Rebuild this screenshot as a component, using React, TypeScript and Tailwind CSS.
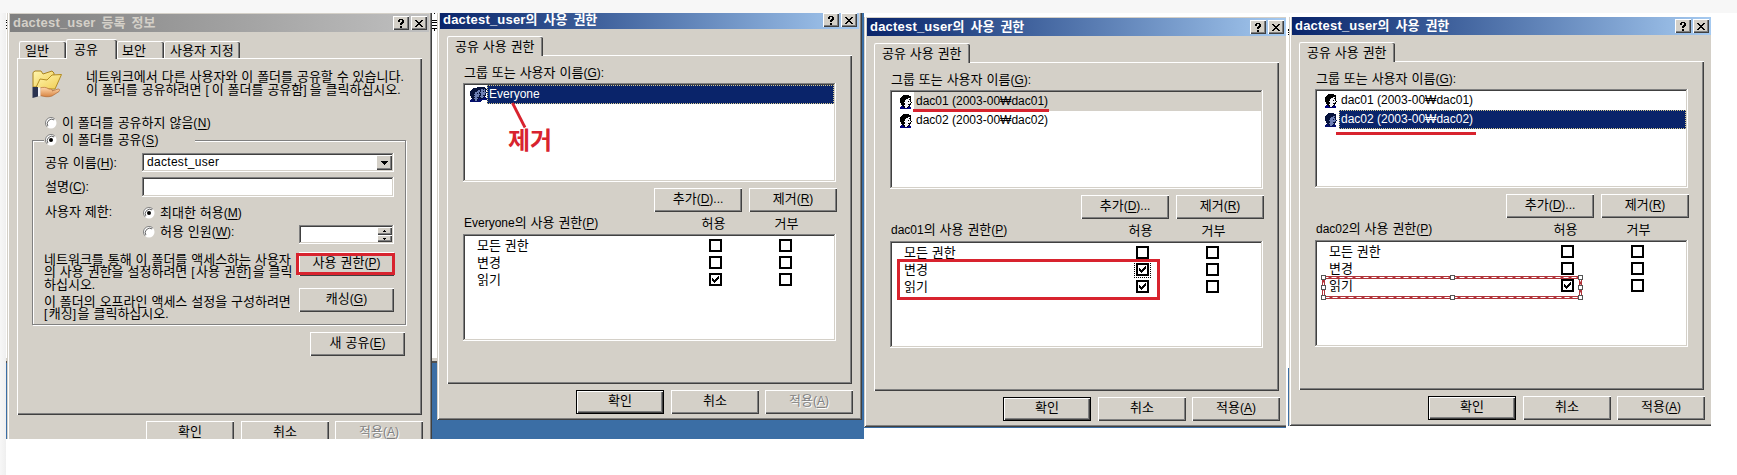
import React from 'react';

const RAISED = 'bg-[#d4d0c8] shadow-[inset_1px_1px_0_#fff,inset_-1px_-1px_0_#404040,inset_-2px_-2px_0_#808080]';
const SUNKEN = 'bg-white shadow-[inset_-1px_-1px_0_#fff,inset_1px_1px_0_#808080,inset_-2px_-2px_0_#d4d0c8,inset_2px_2px_0_#404040]';

/* Label text: "&X" marks an accelerator, Latin runs are set in a narrower face. */
function T({ s, latin = 'text-[12px]', className = '' }: { s: string; latin?: string; className?: string }) {
  const runs = s.match(/[가-힣 ]+|[^가-힣 ]+( [^가-힣 ]+)*/g) ?? [];
  return (
    <span className={`whitespace-pre [word-spacing:1px] ${className}`}>
      {runs.map((run, i) => {
        if (/[가-힣]/.test(run) || run.trim() === '') return <span key={i}>{run}</span>;
        const at = run.indexOf('&');
        return (
          <span key={i} className={`font-['Liberation_Sans','Noto_Sans_CJK_KR',sans-serif] [word-spacing:0px] ${latin}`}>
            {at < 0 ? run : (
              <>
                {run.slice(0, at)}
                <span className="underline decoration-1 underline-offset-2">{run[at + 1]}</span>
                {run.slice(at + 2)}
              </>
            )}
          </span>
        );
      })}
    </span>
  );
}

function Button({ s, className = 'w-[88px]', isDefault = false, disabled = false }: { s: string; className?: string; isDefault?: boolean; disabled?: boolean }) {
  const face = isDefault
    ? 'bg-[#d4d0c8] border border-black shadow-[inset_1px_1px_0_#fff,inset_-1px_-1px_0_#404040,inset_-2px_-2px_0_#808080]'
    : RAISED;
  return (
    <button className={`flex h-[24px] shrink-0 items-center justify-center pb-[4px] ${face} ${className} ${disabled ? 'text-[#808080] [text-shadow:1px_1px_0_#fff]' : ''}`}>
      <T s={s} />
    </button>
  );
}

function TitleBar({ s, active }: { s: string; active: boolean }) {
  return (
    <div className={`flex h-[18px] shrink-0 items-center pl-[3px] pr-[2px] font-bold bg-linear-to-r ${active ? 'from-[#0a246a] to-[#a6caf0] text-white' : 'from-[#808080] to-[#c0c0c0] text-[#d4d0c8]'}`}>
      <T s={s} latin="text-[13px] tracking-[0.2px]" className="grow pb-[2px] [word-spacing:3px]" />
      <div className="flex gap-[2px]">
        <span className={`flex h-[14px] w-[16px] items-center justify-center text-black ${RAISED}`}>
          <svg width="8" height="9" viewBox="0 0 8 9" shapeRendering="crispEdges"><path d="M2 0h4v1h1v3H6v1H5v1H3V4h1V3h1V1H3v2H1V1h1zM3 7h2v2H3z" /></svg>
        </span>
        <span className={`flex h-[14px] w-[16px] items-center justify-center text-black ${RAISED}`}>
          <svg width="8" height="7" viewBox="0 0 8 7" shapeRendering="crispEdges"><path d="M0 0h2v1h1v1h2V1h1V0h2v1H7v1H6v1H5v1h1v1h1v1h1v1H6V6H5V5H3v1H2v1H0V6h1V5h1V4h1V3H2V2H1V1H0z" /></svg>
        </span>
      </div>
    </div>
  );
}

function Frame({ title, active = true, className = '', children }: { title: string; active?: boolean; className?: string; children: React.ReactNode }) {
  return (
    <div className={`relative flex w-[425px] shrink-0 flex-col bg-[#d4d0c8] p-[3px] shadow-[inset_1px_1px_0_#d4d0c8,inset_-1px_-1px_0_#404040,inset_2px_2px_0_#fff,inset_-2px_-2px_0_#808080] ${className}`}>
      <TitleBar s={title} active={active} />
      {children}
    </div>
  );
}

function Check({ on = false, focus = false }: { on?: boolean; focus?: boolean }) {
  return (
    <span className={`flex h-[13px] w-[13px] items-center justify-center border-2 border-black bg-white ${focus ? 'outline outline-dotted outline-black outline-offset-1' : ''}`}>
      {on && (
        <svg width="7" height="7" viewBox="0 0 7 7" shapeRendering="crispEdges"><path d="M0 2h1v1h1v1h1V3h1V2h1V1h1V0h1v3H6v1H5v1H4v1H3v1H2V6H1V5H0z" /></svg>
      )}
    </span>
  );
}

function Radio({ on = false }: { on?: boolean }) {
  return (
    <svg width="12" height="12" viewBox="0 0 12 12" className="shrink-0">
      <circle cx="6" cy="6" r="5.5" fill="#fff" />
      <path d="M2.1 9.9A5.5 5.5 0 0 1 9.9 2.1" fill="none" stroke="#808080" />
      <path d="M2.9 9.1A4.5 4.5 0 0 1 9.1 2.9" fill="none" stroke="#404040" strokeWidth="0.8" />
      {on && <circle cx="6" cy="6" r="2" fill="#000" />}
    </svg>
  );
}

const PERSON = [
  '...KKKKKK...',
  '..KKKKKKKKK.',
  '.KKKKKKKKKK.',
  'KKKKKKKKWWK.',
  'KKKKKKWWWKK.',
  'KKKKKWWWWWK.',
  'KKKKKWWWKWK.',
  'KKKKWWWWWWWK',
  '.KKKKWWWWWK.',
  '.KKKKWWWKKK.',
  '..KKWWWWWK..',
  '.BBKKWWWKB..',
  'BBBBKWWKBBB.',
  'BBBBBBBBBBB.',
];

const GROUP = [
  '.......KKKKKKKK..',
  '...KKKKKKKKKKKKK.',
  '..KKKKKKKKKWWKWKK',
  '.KKKKKKKWWKWWWWK.',
  'KKKKKKKWWWKWWKWK.',
  'KKKKKWWWWKWWWWWWK',
  'KKKKKWWKWKKWWWWK.',
  'KKKKWWWWWWKWWWWK.',
  'KKKKKWWWWKKWWKKK.',
  '.KKKWWWWWKWWWWK..',
  '.KKKKWWKKKKWWKBB.',
  '..KKWWWWKBKKKBBBB',
  '.BBKKWWKBBBBBBBBB',
  'BBBBKWWKBBBB.....',
  'BBBBBBBBBBB......',
];

function Pixels({ rows, inks }: { rows: string[]; inks: Record<string, string> }) {
  return (
    <svg width={rows[0].length} height={rows.length} viewBox={`0 0 ${rows[0].length} ${rows.length}`} shapeRendering="crispEdges">
      {rows.flatMap((row, y) =>
        [...row].map((c, x) => (inks[c] ? <rect key={`${x}-${y}`} x={x} y={y} width="1" height="1" fill={inks[c]} /> : null)),
      )}
    </svg>
  );
}

const NORMAL = { K: '#000', W: '#f4f4f8', B: '#00007c' };
const DIMMED = { K: '#06123c', W: '#6d7fb4', B: '#05106c' };

function SharedFolder() {
  return (
    <svg width="31" height="30" viewBox="0 0 31 30">
      <defs>
        <linearGradient id="sheet" x1="0" y1="0" x2="1" y2="1"><stop offset="0" stopColor="#fff6b0" /><stop offset="1" stopColor="#f0cc50" /></linearGradient>
        <linearGradient id="palm" x1="0" y1="0" x2="0" y2="1"><stop offset="0" stopColor="#ffd9ae" /><stop offset="1" stopColor="#d88442" /></linearGradient>
      </defs>
      <path d="M1 18V3.500L3 2h6l2 3 9-3 2 2v14z" fill="url(#sheet)" stroke="#a98320" />
      <path d="M4 18.500 8 10l7 1 5-5 9.500-.5L23 20H6z" fill="url(#sheet)" stroke="#b38c22" />
      <path d="M8 19c3-1 6-1 9 1 3 0 4 1 3 2l6-2c2 0 2 1 1 2.500l-7 4.500c-4 1.500-8 .5-12-.5z" fill="url(#palm)" stroke="#b06a35" strokeWidth="0.7" />
      <path d="M6 18.500h2.500V27H6z" fill="#f4f4f8" />
      <path d="M.5 18H6v9.500L.5 29z" fill="#2b3350" />
    </svg>
  );
}

/* Sliver of the window behind the dialogs, with the desktop under it. */
function Behind({ className, marks = true }: { className: string; marks?: boolean }) {
  return (
    <div className={`flex shrink-0 flex-col overflow-hidden bg-white ${className}`}>
      {marks && (
        <svg width="5" height="18" viewBox="0 0 5 18" className="shrink-0" shapeRendering="crispEdges">
          <path d="M2 0h1v1H2zM0 7h5v1H0zM0 9h5v1H0zM0 12h5v1H0zM0 15h5v1H0zM2 16h1v2H2z" />
        </svg>
      )}
      <div className="grow" />
      <div className="h-[3px] shrink-0 bg-[#d4d0c8]" />
      <div className="h-[2px] shrink-0 bg-[#505050]" />
      <div className="h-[76px] shrink-0 bg-[#3b6ea5]" />
    </div>
  );
}

const PANEL = 'bg-[#d4d0c8] shadow-[inset_1px_1px_0_#fff,inset_-1px_-1px_0_#404040,inset_-2px_-2px_0_#808080]';
const TAB = 'bg-[#d4d0c8] rounded-t-[2px] border-t border-white shadow-[inset_1px_0_0_#fff,inset_-1px_0_0_#404040,inset_-2px_0_0_#808080]';

type Row = { name: string; icon: React.ReactNode; look?: 'plain' | 'selected' | 'inactive' };

function PermissionDialog({ rows, who, checks, focusRow = -1, applyOff = false, className, children }: {
  rows: Row[]; who: string; checks: boolean[]; focusRow?: number; applyOff?: boolean; className: string; children?: React.ReactNode;
}) {
  const looks = {
    plain: '',
    selected: 'bg-[#0a246a] text-white outline-1 outline-dotted -outline-offset-1 outline-[#d4c98c]',
    inactive: 'bg-[#d4d0c8]',
  };
  return (
    <Frame title="dactest_user의 사용 권한" className={`h-[412px] ${className}`}>
      <div className="flex flex-col pl-[7px] pt-[7px]">
        <div className={`z-10 flex h-[20px] w-[96px] items-center pb-[2px] pl-[8px] ${TAB}`}><T s="공유 사용 권한" /></div>
        <div className={`-mt-px flex h-[329px] w-[405px] flex-col pl-[16px] ${PANEL}`}>
          <div className="mt-[8px] flex h-[20px] items-center pb-px pl-px"><T s="그룹 또는 사용자 이름(&G):" /></div>
          <div className={`flex h-[99px] w-[373px] flex-col p-[2px] ${SUNKEN}`}>
            {rows.map((r) => (
              <div key={r.name} className="flex h-[19px]">
                <span className="flex w-[22px] items-center justify-end pr-[2px]">{r.icon}</span>
                <span className={`flex h-[19px] grow items-center pb-[3px] pl-[2px] ${looks[r.look ?? 'plain']}`}><T s={r.name} latin="text-[12px]" /></span>
              </div>
            ))}
          </div>
          <div className="mt-[6px] flex gap-[7px] pl-[191px]"><Button s="추가(&D)..." /><Button s="제거(&R)" /></div>
          <div className="flex h-[22px] items-center pb-px pl-px">
            <span className="flex w-[213px]"><T s={`${who}의 사용 권한(&P)`} /></span>
            <span className="flex w-[73px] justify-center"><T s="허용" /></span>
            <span className="flex w-[73px] justify-center"><T s="거부" /></span>
          </div>
          <div className={`flex h-[107px] w-[373px] flex-col pl-[14px] pt-[3px] ${SUNKEN}`}>
            {['모든 권한', '변경', '읽기'].map((name, i) => (
              <div key={name} className="flex h-[17px] items-center">
                <span className="flex w-[232px] pb-px"><T s={name} /></span>
                <span className="w-[70px]"><Check on={checks[i]} focus={i === focusRow} /></span>
                <Check />
              </div>
            ))}
          </div>
        </div>
        <div className="mt-[6px] flex pl-[129px]">
          <Button s="확인" isDefault />
          <Button s="취소" className="ml-[7px] w-[88px]" />
          <Button s="적용(&A)" disabled={applyOff} className="ml-[6px] w-[88px]" />
        </div>
      </div>
      {children}
    </Frame>
  );
}

function ShareDialog() {
  return (
    <Frame title="dactest_user 등록 정보" active={false} className="-mt-[2px] h-[460px]">
      <div className="flex flex-col pl-[7px] pt-[7px]">
        <div className="z-10 flex h-[20px] items-end pl-[2px]">
          <div className={`mb-px flex h-[17px] w-[47px] items-center pl-[6px] ${TAB}`}><T s="일반" /></div>
          <div className={`flex h-[20px] w-[51px] items-center pb-px pl-[8px] ${TAB}`}><T s="공유" /></div>
          <div className={`mb-px flex h-[17px] w-[47px] items-center pl-[5px] ${TAB}`}><T s="보안" /></div>
          <div className={`mb-px flex h-[17px] w-[76px] items-center pl-[6px] ${TAB}`}><T s="사용자 지정" /></div>
        </div>
        <div className={`-mt-px flex h-[357px] w-[405px] flex-col pl-[15px] pt-[11px] ${PANEL}`}>
          <div className="flex h-[45px]">
            <SharedFolder />
            <div className="ml-[23px] flex flex-col pt-px leading-[12px]">
              <T s="네트워크에서 다른 사용자와 이 폴더를 공유할 수 있습니다." />
              <T s="이 폴더를 공유하려면 [이 폴더를 공유함]을 클릭하십시오." latin="text-[12px] tracking-[3px]" />
            </div>
          </div>
          <div className="flex h-[18px] items-center gap-[5px] pl-[13px]"><Radio /><T s="이 폴더를 공유하지 않음(&N)" latin="text-[12px] tracking-[0.4px]" className="pb-px" /></div>
          <div className="mt-[8px] flex h-[185px] w-[374px] flex-col pl-[12px] shadow-[inset_0_0_0_1px_#808080,inset_2px_2px_0_#fff,1px_1px_0_#fff]">
            <div className="-mt-[9px] flex h-[18px] w-[151px] shrink-0 items-center gap-[5px] bg-[#d4d0c8] pl-px"><Radio on /><T s="이 폴더를 공유(&S)" latin="text-[12px] tracking-[0.4px]" className="pb-px" /></div>
            <div className="mt-[4px] flex h-[19px] items-center pl-px">
              <span className="flex w-[97px]"><T s="공유 이름(&H):" /></span>
              <div className={`flex h-[19px] w-[252px] items-center p-[2px] pl-[5px] ${SUNKEN}`}>
                <T s="dactest_user" latin="text-[12px] tracking-[0.3px]" className="grow pb-[2px]" />
                <span className={`flex h-[15px] w-[16px] items-center justify-center ${RAISED}`}>
                  <svg width="7" height="4" viewBox="0 0 7 4" shapeRendering="crispEdges"><path d="M0 0h7v1H6v1H5v1H4v1H3V3H2V2H1V1H0z" /></svg>
                </span>
              </div>
            </div>
            <div className="mt-[5px] flex h-[20px] items-center pl-px">
              <span className="flex w-[97px] pb-px"><T s="설명(&C):" /></span>
              <div className={`h-[20px] w-[252px] ${SUNKEN}`} />
            </div>
            <div className="mt-[6px] flex h-[19px] items-center pl-px">
              <span className="flex w-[98px] pb-[2px]"><T s="사용자 제한:" /></span>
              <Radio on /><T s="최대한 허용(&M)" className="pb-px pl-[5px]" />
            </div>
            <div className="flex h-[22px] pl-[99px]">
              <div className="flex h-[19px] w-[156px] items-center"><Radio /><T s="허용 인원(&W):" className="pb-px pl-[5px]" /></div>
              <div className={`mt-[3px] flex h-[19px] w-[95px] justify-end p-[2px] ${SUNKEN}`}>
                <div className="flex flex-col">
                  <span className={`flex h-[8px] w-[15px] items-center justify-center ${RAISED}`}><svg width="3" height="2" viewBox="0 0 3 2" shapeRendering="crispEdges"><path d="M1 0h1v1h1v1H0V1h1z" /></svg></span>
                  <span className={`flex h-[7px] w-[15px] items-center justify-center ${RAISED}`}><svg width="3" height="2" viewBox="0 0 3 2" shapeRendering="crispEdges"><path d="M0 0h3v1H2v1H1V1H0z" /></svg></span>
                </div>
              </div>
            </div>
            <div className="mt-[8px] flex">
              <div className="flex w-[255px] flex-col pt-px leading-[12px]">
                <T s="네트워크를 통해 이 폴더를 액세스하는 사용자" />
                <T s="의 사용 권한을 설정하려면 [사용 권한]을 클릭" latin="text-[12px] tracking-[1.5px]" />
                <T s="하십시오." />
                <T s="이 폴더의 오프라인 액세스 설정을 구성하려면" className="mt-[4px]" />
                <T s="[캐싱]을 클릭하십시오." latin="text-[12px] tracking-[1.5px]" />
              </div>
              <div className="flex flex-col gap-[12px]">
                <div className="relative">
                  <Button s="사용 권한(&P)" className="w-[95px]" />
                  <div className="absolute -left-[3px] top-px h-[22px] w-[99px] border-[3px] border-[#d8232e]" />
                </div>
                <Button s="캐싱(&G)" className="w-[95px]" />
              </div>
            </div>
          </div>
          <Button s="새 공유(&E)" className="ml-[278px] mt-[7px] w-[95px]" />
        </div>
        <div className="mt-[6px] flex pl-[129px]">
          <Button s="확인" />
          <Button s="취소" className="ml-[7px] w-[88px]" />
          <Button s="적용(&A)" disabled className="ml-[6px] w-[88px]" />
        </div>
      </div>
    </Frame>
  );
}

function DashedSelection() {
  const handles = [[2, 2], [131, 2], [259, 2], [2, 12], [259, 12], [2, 22], [131, 22], [259, 22]];
  return (
    <svg width="262" height="25" viewBox="0 0 262 25" className="absolute left-[32px] top-[261px]">
      <rect x="2.5" y="2.5" width="257" height="20" fill="none" stroke="#b0343a" strokeWidth="3" />
      <rect x="2.5" y="2.5" width="257" height="20" fill="none" stroke="#fff" strokeWidth="1" strokeDasharray="5 3" />
      {handles.map(([x, y], i) => (
        <rect key={i} x={x - 1.5} y={y - 1.5} width="4" height="4" fill="#fff" stroke="#555" />
      ))}
    </svg>
  );
}

export default function App() {
  return (
    <div className="flex h-[475px] w-[1737px] flex-col overflow-hidden bg-white font-['Noto_Sans_CJK_KR','Noto_Sans',sans-serif] text-[13px] leading-[16px] text-black">
      <div className="h-[13px] shrink-0 bg-[#f7f7f7]" />
      <div className="flex grow items-start">
        <div className="h-[462px] w-[6px] shrink-0 bg-linear-to-r from-[#f7f7f7] to-[#efefef]" />

        <div className="flex h-[426px] w-[426px] shrink-0 overflow-hidden">
          <Behind className="h-[426px] w-px" />
          <ShareDialog />
        </div>

        <div className="flex h-[426px] w-[432px] shrink-0 overflow-hidden bg-[#3b6ea5]">
          <Behind className="h-[426px] w-[5px]" />
          <PermissionDialog
            className="-mt-[5px]"
            rows={[{ name: 'Everyone', icon: <span className="-mr-[2px]"><Pixels rows={GROUP} inks={DIMMED} /></span>, look: 'selected' }]}
            who="Everyone"
            checks={[false, false, true]}
            applyOff
          >
            <svg width="20" height="30" viewBox="0 0 20 30" className="absolute left-[73px] top-[93px]">
              <path d="M2.500 2 15 26.500" stroke="#d8232e" strokeWidth="2.800" />
            </svg>
            <span className="absolute left-[71px] top-[115px] text-[24px] font-bold leading-[32px] text-[#d8232e]">제거</span>
          </PermissionDialog>
        </div>

        <div className="mt-[4px] flex h-[411px] w-[422px] shrink-0 overflow-hidden bg-[#3b6ea5]">
          <PermissionDialog
            className="-mt-[2px]"
            rows={[
              { name: 'dac01 (2003-00₩dac01)', icon: <Pixels rows={PERSON} inks={NORMAL} />, look: 'inactive' },
              { name: 'dac02 (2003-00₩dac02)', icon: <Pixels rows={PERSON} inks={NORMAL} /> },
            ]}
            who="dac01"
            checks={[false, true, true]}
            focusRow={1}
          >
            <div className="absolute left-[49px] top-[94px] h-[3px] w-[136px] bg-[#d8232e]" />
            <div className="absolute left-[33px] top-[244px] h-[41px] w-[263px] border-[3px] border-[#d8232e]" />
          </PermissionDialog>
        </div>

        <div className="ml-[2px] mt-[4px] flex h-[409px] w-[423px] shrink-0 overflow-hidden">
          <div className="flex h-[409px] w-px shrink-0 flex-col">
            <div className="mt-[12px] h-[6px] border-l border-dotted border-black" />
            <div className="mt-[333px] grow bg-[#3b6ea5]" />
          </div>
          <PermissionDialog
            className="-mt-[3px]"
            rows={[
              { name: 'dac01 (2003-00₩dac01)', icon: <Pixels rows={PERSON} inks={NORMAL} /> },
              { name: 'dac02 (2003-00₩dac02)', icon: <Pixels rows={PERSON} inks={DIMMED} />, look: 'selected' },
            ]}
            who="dac02"
            checks={[false, false, true]}
          >
            <div className="absolute left-[47px] top-[118px] h-[3px] w-[140px] bg-[#d8232e]" />
            <DashedSelection />
          </PermissionDialog>
        </div>
      </div>
    </div>
  );
}
